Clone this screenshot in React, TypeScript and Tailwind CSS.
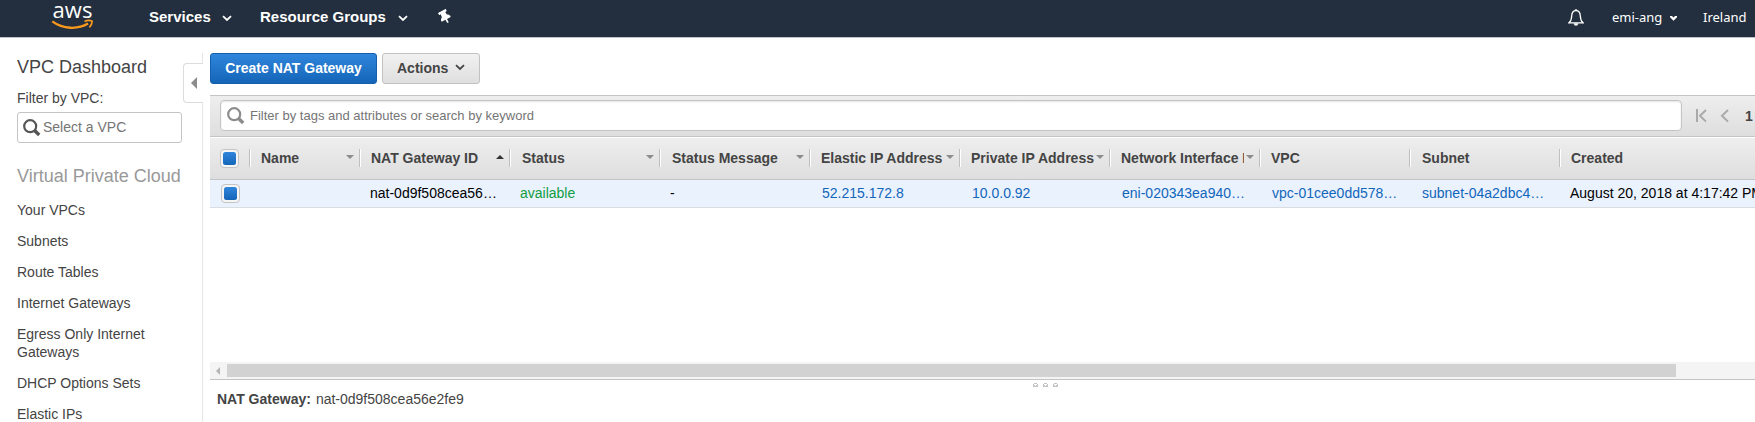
import { FaThumbtack } from "react-icons/fa";

const columns = [
  { title: "Name", width: "w-[110px]", pad: "pl-[10px]", value: "", sort: "down", link: false },
  { title: "NAT Gateway ID", width: "w-[150px]", pad: "pl-[10px]", value: "nat-0d9f508cea56e2fe9", sort: "up", link: false },
  { title: "Status", width: "w-[150px]", pad: "pl-[11px]", value: "available", sort: "down", link: false },
  { title: "Status Message", width: "w-[150px]", pad: "pl-[11px]", value: "-", sort: "down", link: false },
  { title: "Elastic IP Address", width: "w-[150px]", pad: "pl-[10px]", value: "52.215.172.8", sort: "down", link: true },
  { title: "Private IP Address", width: "w-[150px]", pad: "pl-[10px]", value: "10.0.0.92", sort: "down", link: true },
  { title: "Network Interface ID", width: "w-[150px]", pad: "pl-[10px]", value: "eni-020343ea94021b7c5", sort: "down", link: true },
  { title: "VPC", width: "w-[150px]", pad: "pl-[10px]", value: "vpc-01cee0dd57849ab1f", sort: "", link: true },
  { title: "Subnet", width: "w-[150px]", pad: "pl-[11px]", value: "subnet-04a2dbc4e81f", sort: "", link: true },
  { title: "Created", width: "w-[300px]", pad: "pl-[10px]", value: "August 20, 2018 at 4:17:42 PM UTC+3", sort: "", link: false },
];

const navItems = [
  "Your VPCs",
  "Subnets",
  "Route Tables",
  "Internet Gateways",
  "Egress Only Internet Gateways",
  "DHCP Options Sets",
  "Elastic IPs",
];

function Chevron({ className }: { className: string }) {
  return (
    <svg className={className} width="10" height="7" viewBox="0 0 10 7" fill="none">
      <path d="M1 1.2 L5 5 L9 1.2" stroke="currentColor" strokeWidth="1.8" />
    </svg>
  );
}

function SearchIcon({ className }: { className: string }) {
  return (
    <svg className={className} width="18" height="18" viewBox="0 0 18 18" fill="none" stroke="currentColor">
      <circle cx="7.2" cy="7.2" r="6" strokeWidth="2.2" />
      <path d="M11.6 11.6 L16.2 16" strokeWidth="3.4" />
    </svg>
  );
}

function CheckBox() {
  return (
    <span className="flex h-[19px] w-[19px] shrink-0 items-center justify-center rounded-[4px] border border-[#c4c4c4] bg-[#f5f5f5]">
      <span className="h-[13px] w-[13px] rounded-[2.5px] bg-linear-to-b from-[#2f86dc] to-[#1465b8]" />
    </span>
  );
}

function TopBar() {
  return (
    <header className="flex h-[38px] shrink-0 border-b border-[#bfc3c7] bg-[#232f3e] text-white">
      <div className="ml-[51px] flex w-[43px] flex-col items-center">
        <span className="-mt-[6px] -mb-[5px] h-[30px] font-['Open_Sans',sans-serif] text-[22px] leading-[30px] font-medium">aws</span>
        <svg className="shrink-0" width="43" height="11" viewBox="0 0 43 11" fill="none" stroke="#f8991d">
          <path d="M1.3 2.4 C12 10.4 27 10.6 37 4.6" strokeWidth="2.3" />
          <path d="M33.5 2.4 C36 1.2 39 1.2 41 2 C41.3 4.2 40 6.7 38.4 8.4" strokeWidth="1.7" />
        </svg>
      </div>
      <div className="ml-[55px] flex h-[34px] flex-1 items-center text-[15px] font-bold">
        <span className="w-[73px]">Services</span>
        <Chevron className="mt-[3px]" />
        <span className="ml-[28px] w-[138px]">Resource Groups</span>
        <Chevron className="mt-[3px]" />
        <FaThumbtack className="ml-[31px] h-[14px] w-[12px] -rotate-[28deg]" />
      </div>
      <div className="flex h-[35px] w-[187px] shrink-0 items-center font-['Noto_Sans',sans-serif] text-[13px]">
        <svg width="16" height="18" viewBox="0 0 16 18" fill="none" stroke="currentColor">
          <path d="M8 1.7 C4.7 1.7 3.8 4.2 3.7 7 C3.6 10.5 2.6 12.4 1 13.8 H15 C13.4 12.4 12.4 10.5 12.3 7 C12.2 4.2 11.3 1.7 8 1.7 Z" strokeWidth="1.3" />
          <path d="M5.9 14.5 a2.1 2.1 0 0 0 4.2 0 Z M7.2 0.5 h1.6 v1 h-1.6 Z" fill="currentColor" strokeWidth="0.4" />
        </svg>
        <span className="ml-[28px] w-[58px]">emi-ang</span>
        <svg className="mt-[1px]" width="7" height="5" viewBox="0 0 7 5" fill="currentColor">
          <path d="M0 0 H2 L3.5 1.4 L5 0 H7 V1.2 L3.5 4.8 L0 1.2 Z" />
        </svg>
        <span className="ml-[26px]">Ireland</span>
      </div>
    </header>
  );
}

function Sidebar() {
  return (
    <aside className="relative w-[203px] shrink-0 pl-[17px] pt-[18px] text-[#444]">
      <span className="absolute top-[15px] right-0 h-[11px] w-px bg-[#e6e6e6]" />
      <span className="absolute top-[64px] right-0 bottom-0 w-px bg-[#e6e6e6]" />
      <button className="absolute top-[25px] right-0 flex h-[40px] w-[20px] items-center rounded-l-[4px] border border-r-0 border-[#dcdcdc] bg-white pl-[7px]">
        <svg width="6" height="12" viewBox="0 0 6 12" fill="#8c8c8c"><path d="M6 0 V12 L0 6 Z" /></svg>
      </button>
      <h1 className="text-[18px] leading-[22px]">VPC Dashboard</h1>
      <label className="mt-[11px] block text-[14px] leading-[18px]">Filter by VPC:</label>
      <div className="mt-[5px] flex h-[31px] w-[165px] items-center rounded-[3px] border border-[#c4c4c4] text-[14px] text-[#757575]">
        <SearchIcon className="mr-[2px] ml-[5px] text-[#555]" />
        Select a VPC
      </div>
      <h2 className="mt-[22px] text-[18px] leading-[22px] text-[#999]">Virtual Private Cloud</h2>
      <nav className="mt-[14px] flex w-[150px] flex-col gap-[13px] text-[14px] leading-[18px]">
        {navItems.map((item) => (
          <a key={item}>{item}</a>
        ))}
      </nav>
    </aside>
  );
}

function SortArrow({ dir }: { dir: string }) {
  return (
    <svg className="absolute top-[18px] right-[6px]" width="8" height="4" viewBox="0 0 8 4" fill={dir === "up" ? "#333" : "#8c8c8c"}>
      <path d={dir === "up" ? "M0 4 L4 0 L8 4 Z" : "M0 0 H8 L4 4 Z"} />
    </svg>
  );
}

function GatewayTable() {
  return (
    <div className="overflow-hidden text-[14px]">
      <div className="flex h-[42px] w-[1660px] border-b border-[#c4c4c4] bg-linear-to-b from-[#eeeeee] to-[#dedede] pt-[11px] font-bold text-[#444]">
        <div className="h-[18px] w-[40px] shrink-0 border-r border-[#bfbfbf] pl-[10px]">
          <CheckBox />
        </div>
        {columns.map((c) => (
          <div key={c.title} className={`relative -mt-3 flex shrink-0 pt-3 ${c.width}`}>
            <div className={`h-[18px] w-full overflow-hidden border-r border-l border-r-[#bfbfbf] border-l-white leading-[18px] whitespace-nowrap ${c.pad}`}>
              <div className={c.title === "Network Interface ID" ? "w-[123px] overflow-hidden" : ""}>{c.title}</div>
            </div>
            {c.sort && <SortArrow dir={c.sort} />}
          </div>
        ))}
      </div>
      <div className="flex h-[28px] w-[1660px] items-center border-b border-[#d9dde2] bg-[#eaf2fe] text-black">
        <div className="w-[40px] shrink-0 pl-[11px]">
          <CheckBox />
        </div>
        {columns.map((c) => (
          <div
            key={c.title}
            className={`shrink-0 truncate pr-[12px] ${c.link ? "pl-[12px]" : "pl-[10px]"} ${c.width} ${c.link ? "text-[#1166bb]" : c.title === "Status" ? "text-[#0f9d3f]" : ""}`}
          >
            {c.value}
          </div>
        ))}
      </div>
    </div>
  );
}

export default function App() {
  return (
    <div className="flex h-[422px] w-full flex-col overflow-hidden bg-white font-['Liberation_Sans',Arial,sans-serif]">
      <TopBar />
      <div className="flex min-h-0 flex-1">
        <Sidebar />
        <main className="ml-[7px] flex min-w-0 flex-1 flex-col pt-[15px]">
          <div className="flex h-[31px] gap-[5px] text-[14px] font-bold">
            <button className="w-[167px] rounded-[3px] border border-[#1560ad] bg-linear-to-b from-[#2f86dc] to-[#1465b8] text-white">
              Create NAT Gateway
            </button>
            <button className="flex w-[98px] items-center rounded-[3px] border border-[#c2c2c2] bg-linear-to-b from-[#f1f1f1] to-[#dfdfdf] pl-[14px] text-[#444]">
              Actions
              <Chevron className="ml-[7px] -mt-[3px]" />
            </button>
          </div>
          <div className="mt-[11px] flex h-[42px] shrink-0 border-y border-[#c4c4c4] bg-linear-to-b from-[#eeeeee] to-[#dedede] pt-[4px] pl-[10px]">
            <div className="flex h-[31px] w-[1462px] items-center rounded-[4px] border border-[#c4c4c4] bg-white text-[13px] text-[#757575] shadow-[inset_0_1px_2px_#e4e4e4]">
              <SearchIcon className="mr-[5px] ml-[6px] text-[#8c8c8c]" />
              Filter by tags and attributes or search by keyword
            </div>
            <svg className="mt-[9px] ml-[14px]" width="34" height="14" viewBox="0 0 34 14" fill="none" stroke="#aaa" strokeWidth="2">
              <path d="M1 0 V13 M10 1 L4 6.7 L10 12.6 M32 1 L26 6.7 L32 12.6" />
            </svg>
            <span className="mt-[7px] ml-[15px] text-[14px] leading-[18px] font-bold text-[#444]">1</span>
          </div>
          <div className="h-px shrink-0 bg-white" />
          <GatewayTable />
          <div className="mt-[154px] flex h-[18px] shrink-0 items-center border-b border-[#c4c4c4] bg-[#f4f4f4] pl-[6px]">
            <svg width="4" height="8" viewBox="0 0 4 8" fill="#b5b5b5"><path d="M4 0 V8 L0 4 Z" /></svg>
            <div className="ml-[7px] h-[13px] w-[1449px] bg-[#d2d2d2]" />
          </div>
          <div className="flex h-[7px] shrink-0 items-end gap-[5px] pl-[823px]">
            {[0, 1, 2].map((i) => (
              <svg key={i} width="5" height="4" viewBox="0 0 5 4" fill="#c4c4c4">
                <path d="M1 0 H4 V1 H5 V4 H0 V1 H1 Z" />
                <path d="M1 1 H4 V2 H3 V3 H2 V2 H1 Z" fill="#fff" />
              </svg>
            ))}
          </div>
          <div className="mt-[3px] pl-[7px] text-[14px] leading-[18px] text-[#444]">
            <b>NAT Gateway:</b>
            <span className="ml-[5px]">nat-0d9f508cea56e2fe9</span>
          </div>
        </main>
      </div>
    </div>
  );
}
